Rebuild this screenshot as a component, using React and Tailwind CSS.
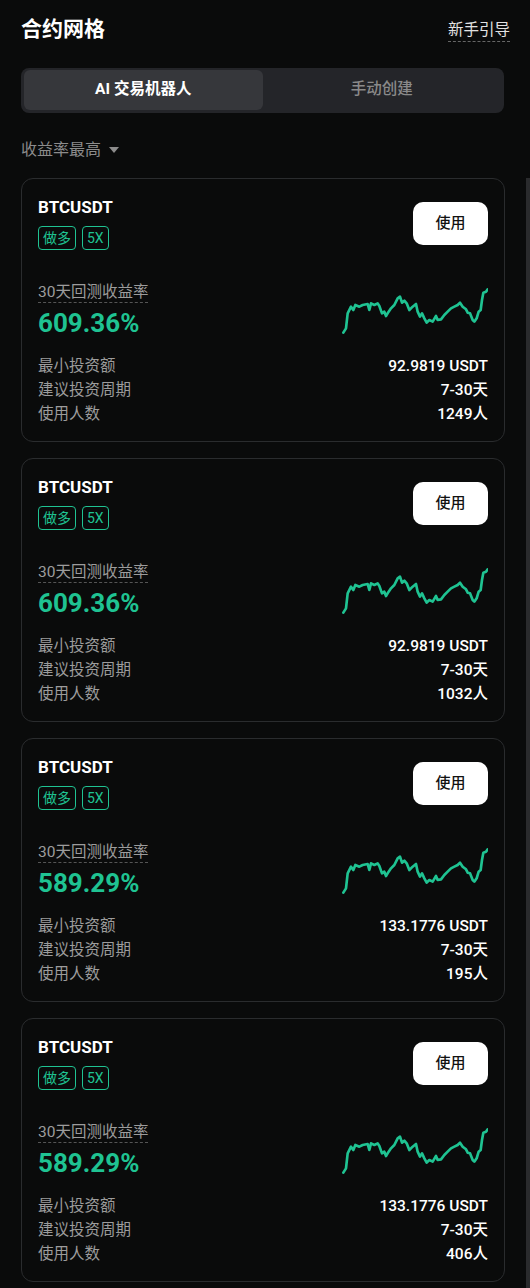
import React from 'react';

const chartPoints =
  '22,158 30,145 35,100 45,80 52,90 58,75 70,80 80,75 95,72 100,90 105,70 115,75 125,70 130,78 138,100 145,95 150,108 158,95 165,85 175,75 185,55 192,50 198,68 205,62 212,70 220,90 230,80 240,72 245,95 252,110 258,100 265,115 272,128 280,120 290,125 300,108 305,120 315,118 325,105 335,95 345,85 355,80 365,75 372,68 380,80 390,88 395,98 402,100 410,120 415,125 422,115 428,95 434,90 438,60 442,38 450,35 455,28';

const bots = [
  { rate: '609.36%', min: '92.9819 USDT', period: '7-30天', users: '1249人' },
  { rate: '609.36%', min: '92.9819 USDT', period: '7-30天', users: '1032人' },
  { rate: '589.29%', min: '133.1776 USDT', period: '7-30天', users: '195人' },
  { rate: '589.29%', min: '133.1776 USDT', period: '7-30天', users: '406人' },
];

const Sparkline = () => (
  <svg width="152" height="60" viewBox="0 0 456 180" fill="none">
    <polyline
      points={chartPoints}
      stroke="#1fc392"
      strokeWidth="8"
      strokeLinejoin="round"
      strokeLinecap="round"
    />
  </svg>
);

const BotCard = ({ bot }) => (
  <div className="border border-[#2a2c2e] rounded-[12px] px-[16px] pt-[17px] pb-[15px]">
    <div className="flex justify-between">
      <div>
        <div className="text-[17px] leading-[22px] font-bold text-white">BTCUSDT</div>
        <div className="flex gap-[6px] mt-[8px]">
          <span className="h-[24px] px-[4px] flex items-center border border-[#1fc392] rounded-[4px] text-[14px] text-[#1fc392]">
            做多
          </span>
          <span className="h-[24px] px-[4px] flex items-center border border-[#1fc392] rounded-[4px] text-[14px] text-[#1fc392]">
            5X
          </span>
        </div>
      </div>
      <button className="mt-[6px] w-[75px] h-[43px] bg-white rounded-[10px] text-[15px] font-medium text-[#111]">
        使用
      </button>
    </div>

    <div className="flex justify-between mt-[30px]">
      <div>
        <div className="inline-block text-[15.5px] leading-[20px] text-[#9c9c9c] border-b border-dashed border-[#555]">
          30天回测收益率
        </div>
        <div className="mt-[4px] text-[26px] leading-[30px] font-bold text-[#1fc392]">{bot.rate}</div>
      </div>
      <Sparkline />
    </div>

    <div className="mt-[14px] text-[15.5px] leading-[24px]">
      <div className="flex justify-between">
        <span className="text-[#9c9c9c]">最小投资额</span>
        <span className="text-white font-medium">{bot.min}</span>
      </div>
      <div className="flex justify-between">
        <span className="text-[#9c9c9c]">建议投资周期</span>
        <span className="text-white font-medium">{bot.period}</span>
      </div>
      <div className="flex justify-between">
        <span className="text-[#9c9c9c]">使用人数</span>
        <span className="text-white font-medium">{bot.users}</span>
      </div>
    </div>
  </div>
);

export default function App() {
  return (
    <div
      className="h-[1288px] overflow-hidden bg-[#0a0b0b] flex flex-col"
      style={{ fontFamily: 'Roboto, "Noto Sans CJK SC", sans-serif' }}
    >
      <div className="h-[60px] flex items-center justify-between pl-[21px] pr-[20px] shrink-0">
        <h1 className="text-[21px] font-bold text-white">合约网格</h1>
        <span className="text-[15.5px] text-[#e2e2e2] border-b border-dashed border-[#666] leading-[22px]">
          新手引导
        </span>
      </div>

      <div className="mt-[8px] ml-[21px] mr-[26px] h-[45px] p-[3px] pt-[2px] bg-[#242529] rounded-[8px] flex shrink-0">
        <div className="flex-1 bg-[#36373b] rounded-[6px] flex items-center justify-center text-[15.5px] font-bold text-white">
          AI 交易机器人
        </div>
        <div className="flex-1 flex items-center justify-center text-[15.5px] font-medium text-[#8a8a8a]">
          手动创建
        </div>
      </div>

      <div className="h-[65px] pt-[9px] pl-[21px] flex items-center gap-[8px] shrink-0">
        <span className="text-[16px] text-[#8c8c8c]">收益率最高</span>
        <svg width="10" height="7" viewBox="0 0 10 7">
          <path d="M0 0 H10 L5 6 Z" fill="#8c8c8c" />
        </svg>
      </div>

      <div className="flex-1 flex min-h-0">
        <div className="flex-1 pl-[21px] pr-[21px] flex flex-col gap-[16px]">
          {bots.map((bot, i) => (
            <BotCard key={i} bot={bot} />
          ))}
        </div>
        <div className="w-[4px] bg-[#2a2b2d]" />
      </div>
    </div>
  );
}
